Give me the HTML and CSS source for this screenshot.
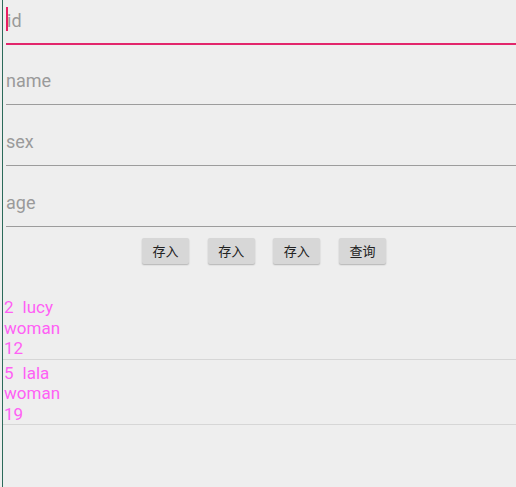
FILE: index.html
```html
<!DOCTYPE html>
<html>
<head>
<meta charset="utf-8">
<link rel="stylesheet" href="styles.css">
</head>
<body>
<div class="screen">
  <div class="form">
    <div class="field focus"><span class="cursor"></span><span class="hint id-hint">id</span></div>
    <div class="field"><span class="hint">name</span></div>
    <div class="field"><span class="hint">sex</span></div>
    <div class="field"><span class="hint">age</span></div>
  </div>
  <div class="buttons">
    <button class="btn">存入</button>
    <button class="btn">存入</button>
    <button class="btn">存入</button>
    <button class="btn">查询</button>
  </div>
  <div class="list">
    <div class="item">
      <div class="line"><span>2</span><span class="name">lucy</span></div>
      <div class="line">woman</div>
      <div class="line">12</div>
    </div>
    <div class="item">
      <div class="line"><span>5</span><span class="name">lala</span></div>
      <div class="line">woman</div>
      <div class="line">19</div>
    </div>
  </div>
</div>
</body>
</html>
```

FILE: styles.css
```css
html, body {
  margin: 0;
  padding: 0;
  background: #eeeeee;
  height: 100%;
}
body {
  font-family: Roboto, "Noto Sans", "Noto Sans CJK SC", sans-serif;
  overflow: hidden;
}
.screen {
  margin-left: 2px;
  border-left: 1px solid #2c6a5a;
  min-height: 487px;
  box-sizing: border-box;
}
.form {
  padding-left: 3px;
}
.field {
  position: relative;
  padding-top: 25px;
  padding-bottom: 11px;
  height: 24px;
  border-bottom: 1px solid #9c9c9c;
  font-size: 18px;
  line-height: 24px;
  color: #9a9a9a;
}
.field.focus {
  padding-top: 9px;
  padding-bottom: 10px;
  border-bottom: 2px solid #e2266b;
  margin-bottom: -1px;
}
.hint {
  display: inline-block;
}
.id-hint {
  margin-left: 1px;
}
.cursor {
  position: absolute;
  left: 0;
  top: 7px;
  width: 2px;
  height: 24px;
  background: #e91e63;
}
.buttons {
  display: flex;
  justify-content: center;
  gap: 18.7px;
  padding-left: 9px;
  margin-top: 11px;
}
.btn {
  width: 47px;
  height: 26px;
  margin: 0;
  padding: 0;
  border: none;
  border-radius: 2px;
  background: #d7d7d7;
  box-shadow: 0 1px 1.5px rgba(0, 0, 0, 0.25);
  font-family: "Noto Sans CJK SC", sans-serif;
  font-size: 13px;
  color: #222222;
  line-height: 26px;
}
.list {
  margin-top: 30px;
}
.item {
  padding-top: 3px;
  padding-left: 1px;
  border-bottom: 1px solid #d6d6d6;
  height: 61.5px;
}
.line {
  font-size: 17px;
  line-height: 20.5px;
  color: #ff60f5;
}
.name {
  margin-left: 9px;
}
```
